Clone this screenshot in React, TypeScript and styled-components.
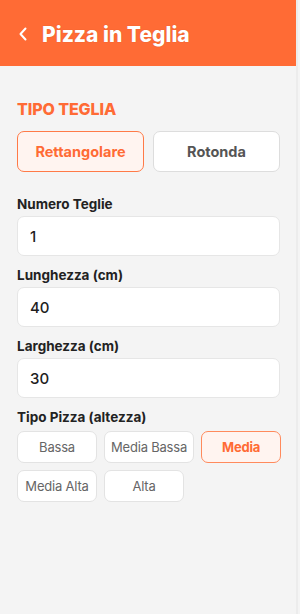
import React, { useState } from 'react'
import styled, { createGlobalStyle } from 'styled-components'

const GlobalStyle = createGlobalStyle`
  html, body {
    margin: 0;
    padding: 0;
    background: #f4f4f4;
  }
  body {
    font-family: Inter, "Noto Sans", sans-serif;
    -webkit-font-smoothing: antialiased;
  }
  * {
    box-sizing: border-box;
  }
`

const Page = styled.div`
  min-height: 614px;
  width: 298px;
  background: #f4f4f4;
  border-right: 2px solid #ececec;
`

const Header = styled.header`
  height: 66px;
  background: #ff6b35;
  display: flex;
  align-items: center;
  padding: 2px 0 0 18px;
  gap: 14px;
`

const BackButton = styled.button`
  border: none;
  background: none;
  margin: 0;
  padding: 0;
  display: flex;
  align-items: center;
  cursor: pointer;
`

const Title = styled.h1`
  margin: 0;
  color: #ffffff;
  font-size: 21px;
  font-weight: 800;
  text-shadow: 0 0 1px rgba(150, 50, 10, 0.45);
`

const Content = styled.main`
  padding: 33px 16px 0 17px;
`

const SectionTitle = styled.h2`
  margin: 0 0 12px;
  color: #ff6b35;
  font-size: 16px;
  line-height: 20px;
  font-weight: 800;
  letter-spacing: -0.1px;
`

const SegmentRow = styled.div`
  display: grid;
  grid-template-columns: 1fr 1fr;
  gap: 9px;
  margin-bottom: 24px;
`

const SegmentButton = styled.button<{ $active?: boolean }>`
  height: 41px;
  margin: 0;
  border-radius: 7px;
  border: 1.5px solid ${p => (p.$active ? '#ff7a47' : '#dddddd')};
  background: ${p => (p.$active ? '#fff4f0' : '#ffffff')};
  color: ${p => (p.$active ? '#ff6b35' : '#555555')};
  font-family: inherit;
  font-size: 14.5px;
  font-weight: 700;
  cursor: pointer;
`

const Field = styled.div`
  display: flex;
  flex-direction: column;
  margin-bottom: 11px;
`

const Label = styled.label<{ $gap?: number }>`
  font-size: 13.5px;
  line-height: 16px;
  font-weight: 700;
  color: #222222;
  margin-bottom: ${p => p.$gap ?? 4}px;
`

const Input = styled.input`
  height: 40px;
  width: 100%;
  margin: 0;
  border: 1px solid #e6e6e6;
  border-radius: 7px;
  background: #ffffff;
  padding: 0 12px;
  font-family: inherit;
  font-size: 15px;
  font-weight: 500;
  color: #1e1e1e;
  outline: none;
`

const ChipGrid = styled.div`
  display: flex;
  flex-wrap: wrap;
  gap: 7px;
  width: 272px;
`

const Chip = styled.button<{ $active?: boolean }>`
  flex: 0 0 auto;
  height: 32px;
  min-width: 80px;
  margin: 0;
  padding: 0 6px;
  border-radius: 7px;
  border: 1px solid ${p => (p.$active ? '#ff8a5c' : '#e3e3e3')};
  background: ${p => (p.$active ? '#fff4f0' : '#ffffff')};
  color: ${p => (p.$active ? '#ff6b35' : '#666666')};
  font-family: inherit;
  font-size: 13px;
  letter-spacing: -0.2px;
  font-weight: ${p => (p.$active ? 700 : 400)};
  cursor: pointer;
`

const tipi = ['Bassa', 'Media Bassa', 'Media', 'Media Alta', 'Alta']

const App: React.FC = () => {
  const [forma, setForma] = useState('rett')
  const [tipo, setTipo] = useState('Media')
  const [teglie, setTeglie] = useState('1')
  const [lunghezza, setLunghezza] = useState('40')
  const [larghezza, setLarghezza] = useState('30')

  return (
    <Page>
      <GlobalStyle />
      <Header>
        <BackButton aria-label="Indietro">
          <svg width="10" height="14" viewBox="0 0 10 14" fill="none">
            <path
              d="M7.5 1.5L2.5 7l5 5.5"
              stroke="#ffffff"
              strokeWidth="2"
              strokeLinecap="round"
              strokeLinejoin="round"
            />
          </svg>
        </BackButton>
        <Title>Pizza in Teglia</Title>
      </Header>
      <Content>
        <SectionTitle>TIPO TEGLIA</SectionTitle>
        <SegmentRow>
          <SegmentButton $active={forma === 'rett'} onClick={() => setForma('rett')}>
            Rettangolare
          </SegmentButton>
          <SegmentButton $active={forma === 'rot'} onClick={() => setForma('rot')}>
            Rotonda
          </SegmentButton>
        </SegmentRow>

        <Field>
          <Label>Numero Teglie</Label>
          <Input value={teglie} onChange={e => setTeglie(e.target.value)} />
        </Field>
        <Field>
          <Label>Lunghezza (cm)</Label>
          <Input value={lunghezza} onChange={e => setLunghezza(e.target.value)} />
        </Field>
        <Field>
          <Label>Larghezza (cm)</Label>
          <Input value={larghezza} onChange={e => setLarghezza(e.target.value)} />
        </Field>
        <Field>
          <Label $gap={6}>Tipo Pizza (altezza)</Label>
          <ChipGrid>
            {tipi.map(t => (
              <Chip key={t} $active={tipo === t} onClick={() => setTipo(t)}>
                {t}
              </Chip>
            ))}
          </ChipGrid>
        </Field>
      </Content>
    </Page>
  )
}

export default App
